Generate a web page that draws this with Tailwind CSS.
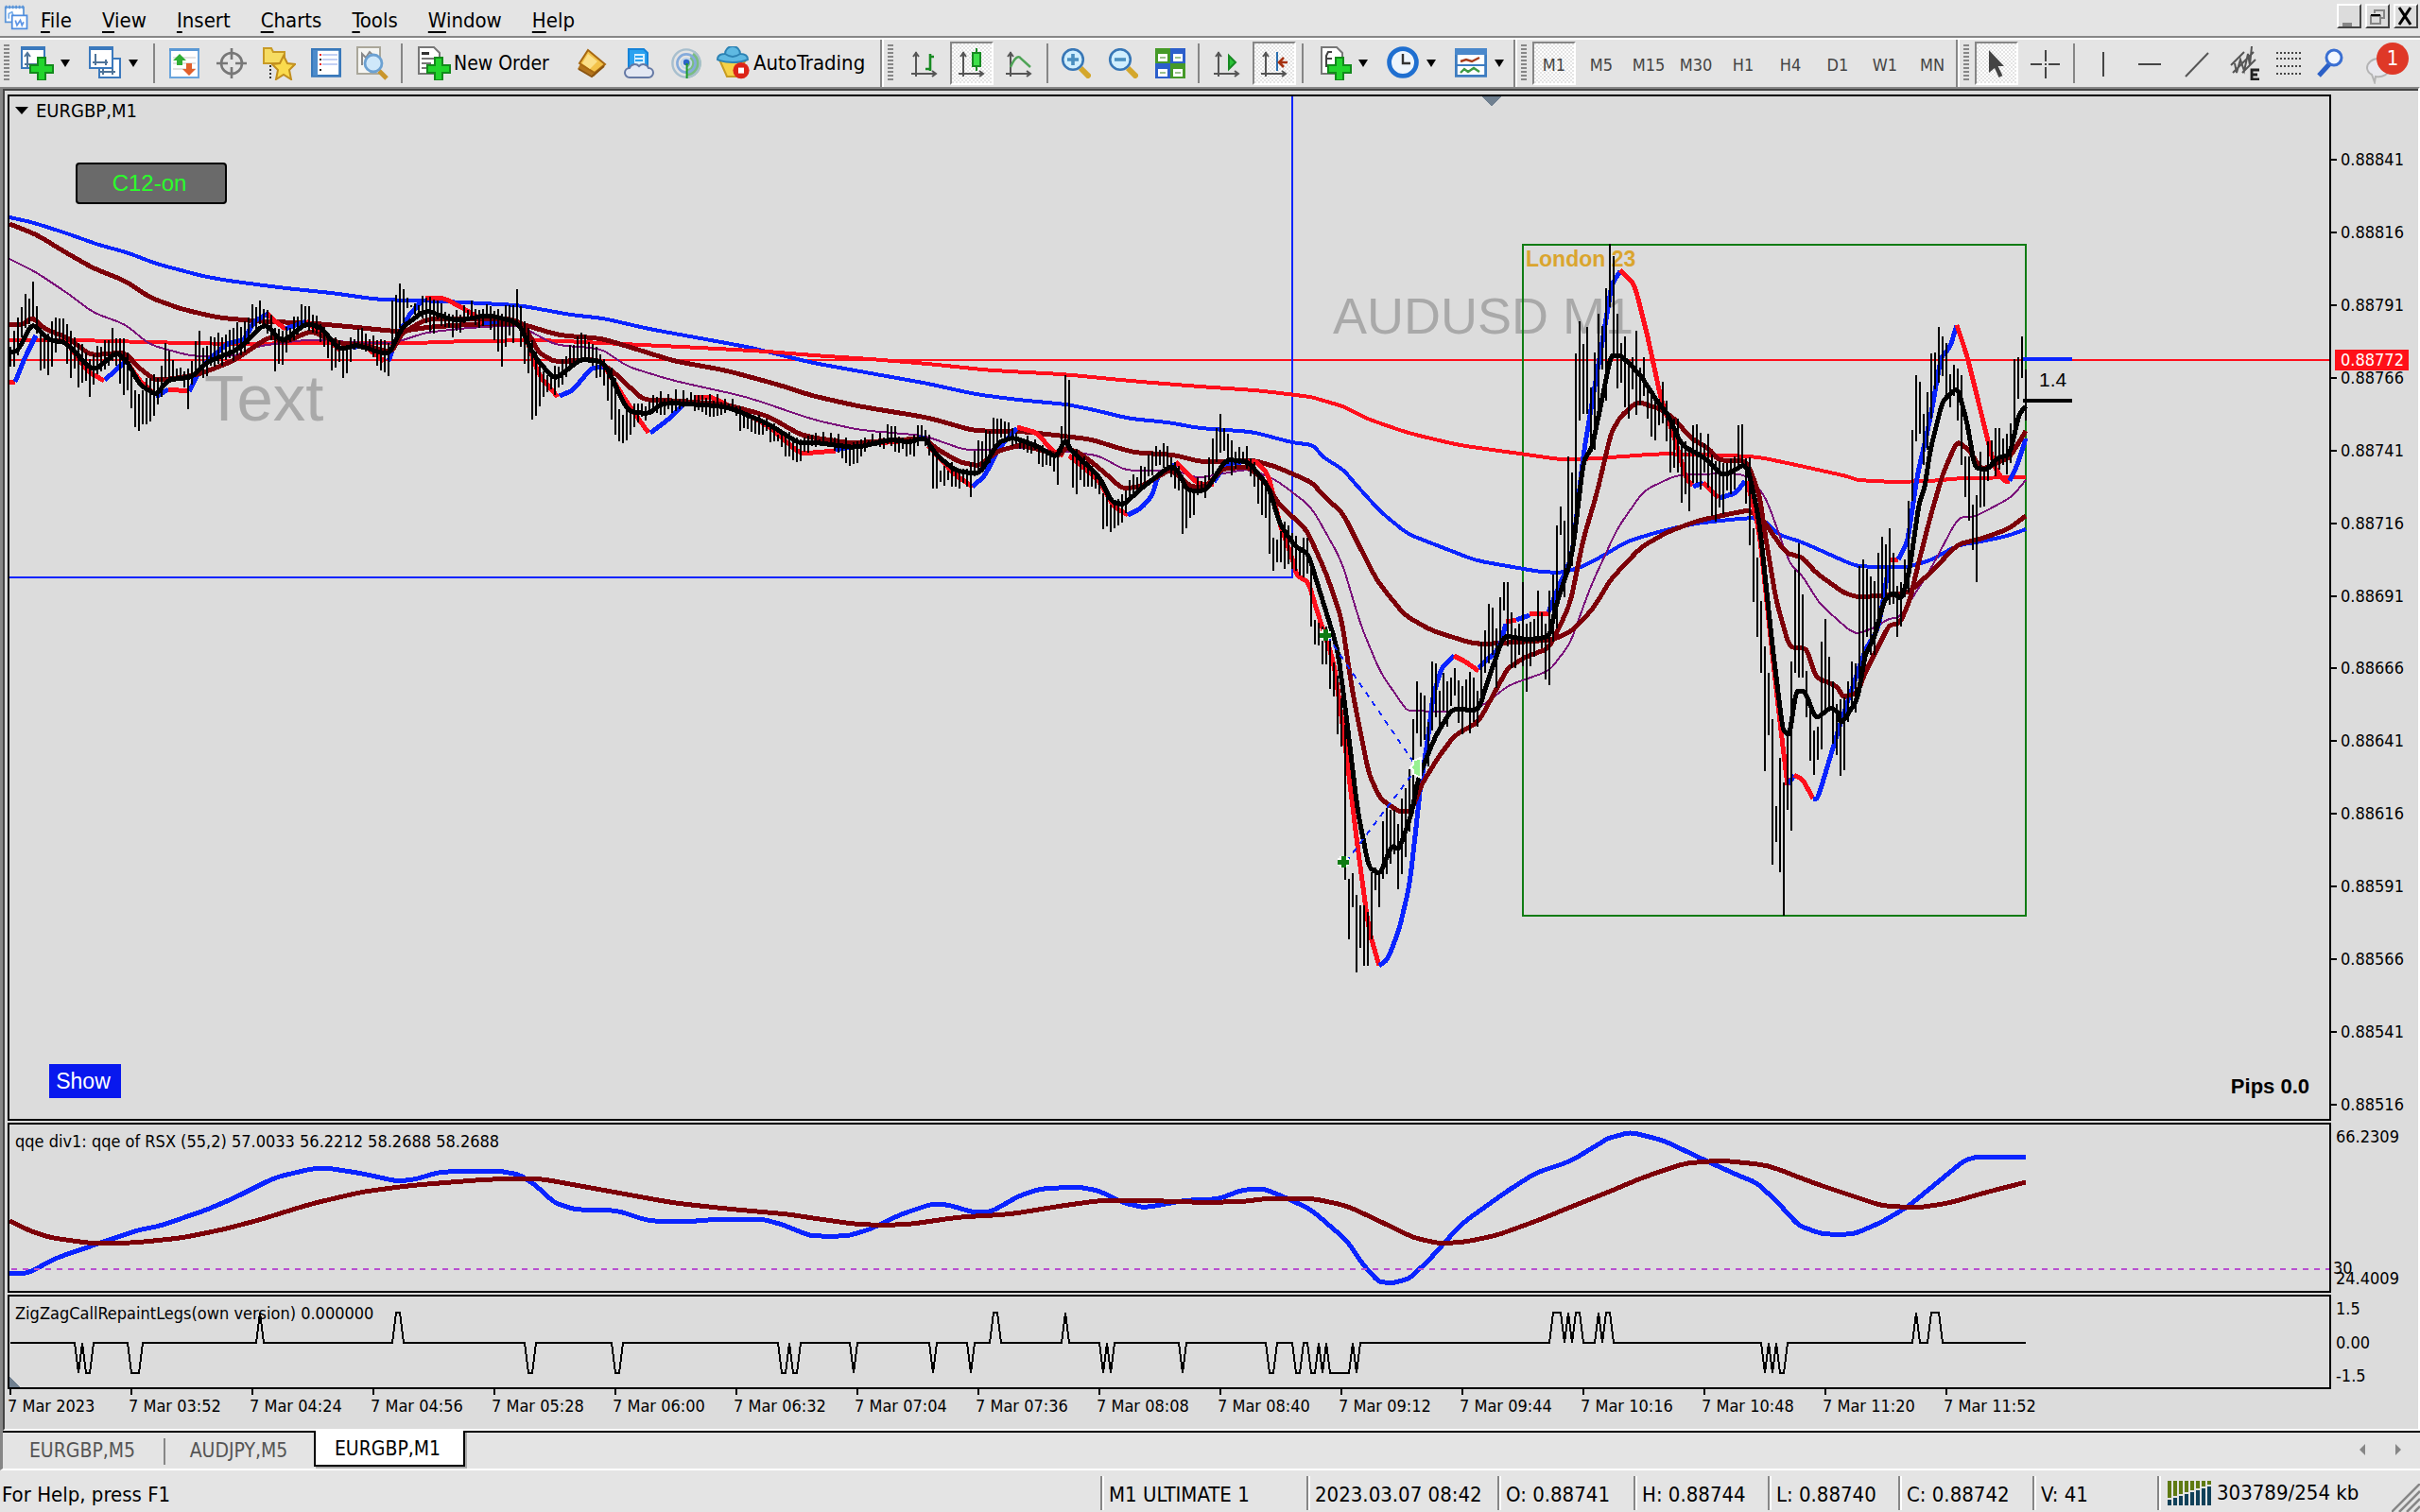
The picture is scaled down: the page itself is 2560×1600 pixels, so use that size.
<!DOCTYPE html>
<html lang="en">
<head>
<meta charset="utf-8">
<title>EURGBP,M1</title>
<script src="https://cdn.jsdelivr.net/npm/@tailwindcss/browser@4"></script>
</head>
<body class="flex min-h-screen flex-col overflow-x-hidden bg-[#e4e4e4] font-['DejaVu_Sans_Condensed','DejaVu_Sans',sans-serif] text-[22px] leading-6 text-black">

<header class="flex h-[42px] shrink-0 items-center border-b-2 border-white shadow-[inset_0_-2px_0_#868686]">
  <svg class="ml-0.5 size-8 shrink-0 self-start pt-1" viewBox="0 0 16 16" fill="none"><path d="M1 2h11v9H1z" fill="#fff" stroke="#5b95d8"/><path d="M1 2h11" stroke="#5b95d8" stroke-width="2" stroke-dasharray="1 1"/><path d="M3 9V6l2-1 1 3" stroke="#7bb0ea"/><path d="M5 7h9v8H5z" fill="#fff" stroke="#4f8de0"/><path d="M7 10l1 3 2-3 1 3 1-2" stroke="#5f96e6"/></svg>
  <nav class="flex flex-1 items-center pt-1" aria-label="Main menu">
    <button class="pl-[9px] pr-4"><u class="underline-offset-4">F</u>ile</button>
    <button class="px-4"><u class="underline-offset-4">V</u>iew</button>
    <button class="px-4"><u class="underline-offset-4">I</u>nsert</button>
    <button class="px-4"><u class="underline-offset-4">C</u>harts</button>
    <button class="px-4"><u class="underline-offset-4">T</u>ools</button>
    <button class="px-4"><u class="underline-offset-4">W</u>indow</button>
    <button class="px-4"><u class="underline-offset-4">H</u>elp</button>
  </nav>
  <div class="mr-0.5 mt-1 flex gap-1 self-start">
    <button aria-label="Minimize" class="size-[26px] border-2 border-b-[#444] border-l-white border-r-[#444] border-t-white bg-[#dcdcdc]"><svg class="size-full" viewBox="0 0 11 11"><path d="M2 9h5v2H2z" fill="#868686"/></svg></button>
    <button aria-label="Restore" class="size-[26px] border-2 border-b-[#444] border-l-white border-r-[#444] border-t-white bg-[#dcdcdc]"><svg class="size-full" viewBox="0 0 11 11" fill="none" stroke="#868686"><path d="M4 2.500h5v4H7M4 2v2M2 5.500h5v4H2z"/><path d="M2 5h5" stroke="#000"/></svg></button>
    <button aria-label="Close" class="size-[26px] border-2 border-b-[#444] border-l-white border-r-[#444] border-t-white bg-[#dcdcdc]"><svg class="size-full" viewBox="0 0 11 11"><path d="M2 1l6 9M8 1l-6 9" stroke="#000" stroke-width="1.500"/></svg></button>
  </div>
</header>

<div class="flex h-[50px] shrink-0 items-center overflow-hidden" role="toolbar" aria-label="Toolbar">
  <span class="mx-1 h-10 w-1.5 shrink-0 bg-[repeating-linear-gradient(#868686_0_2px,transparent_2px_4px)]"></span>
  <button aria-label="New chart" class="flex h-11 w-[72px] shrink-0 items-center gap-1.5 pl-2"><svg class="size-9" viewBox="0 0 18 18"><path d="M.5.500h12v11H.5z" fill="#fff" stroke="#3b79bd"/><path d="M0 0h13v2H0z" fill="#3b79bd"/><path d="M3.500 4v7M2 5.500l1.500-2L5 5.500M2 9.500h8" stroke="#4f7499" fill="none"/><path d="M9 6h4v4h4v4h-4v4H9v-4H5v-4h4z" fill="#22d52c" stroke="#128a1c"/></svg><svg class="h-2 w-2.5" viewBox="0 0 10 8"><path d="M0 0h10L5 8z"/></svg></button>
  <button aria-label="Profiles" class="flex h-11 w-[72px] shrink-0 items-center gap-1.5 pl-2"><svg class="size-9" viewBox="0 0 18 18"><path d="M5.500 6.500h11v10h-11z" fill="#fff" stroke="#3b79bd"/><path d="M.5.500h12v11H.5z" fill="#fff" stroke="#3b79bd"/><path d="M0 0h13v2H0z" fill="#3b79bd"/><path d="M3.500 4v6M2 8.500h8M9 7v3M6 13.500h8M12.500 12v3M7.500 12v3" stroke="#4f7499" fill="none"/></svg><svg class="h-2 w-2.5" viewBox="0 0 10 8"><path d="M0 0h10L5 8z"/></svg></button>
  <span class="ml-1 mr-1.5 h-[42px] w-0.5 shrink-0 bg-[#868686]"></span>
  <button aria-label="Market watch" class="grid h-11 w-[50px] shrink-0 place-items-center"><svg class="size-8" viewBox="0 0 16 16"><path d="M.5.500h15v15H.5z" fill="#fff" stroke="#6aa5dd"/><path d="M0 0h16v1.500H0z" fill="#5a98d4"/><path d="M2 5h12M2 8h12M2 11h12" stroke="#e2e2e2"/><path d="M5.500 3L9 6.500H7V9H4V6.500H2z" fill="#2fae35"/><path d="M10.500 14.500L7 11h2V8h3v3h2z" fill="#e2602b"/></svg></button>
  <button aria-label="Data window" class="grid h-11 w-[50px] shrink-0 place-items-center"><svg class="size-8" viewBox="0 0 16 16" fill="none" stroke="#777" stroke-width="1.300"><circle cx="8" cy="8" r="5.500"/><path d="M8 0v6M8 10v6M0 8h6M10 8h6"/></svg></button>
  <button aria-label="Navigator" class="grid h-11 w-[50px] shrink-0 place-items-center"><svg class="size-9" viewBox="0 0 18 18"><path d="M1 3V1h4l1 2h6v6H1z" fill="#f6dc62" stroke="#c89a26"/><path d="M4.500 10v7" stroke="#333" stroke-dasharray="1 1"/><path d="M11.500 5l2 4 4 .5-3 3 1 5-4-2.500-4 2.500 1-5-3-3 4-.5z" fill="#fadb4e" stroke="#c18e1e"/></svg></button>
  <button aria-label="Terminal" class="grid h-11 w-[50px] shrink-0 place-items-center"><svg class="size-8" viewBox="0 0 16 16"><path d="M.7.700h14.600v14H.7z" fill="#fff" stroke="#3878ba" stroke-width="1.400"/><path d="M1 1h2.500v13.500H1z" fill="#4c8bcb"/><path d="M6 3.500h8M6 6h8M6 8.500h8" stroke="#c3d0f4"/><path d="M4.500 3h1v1h-1zM4.500 8h1v1h-1z" fill="#e22"/><path d="M4.500 5.500h1v1h-1zM4.500 11h1v1h-1z" fill="#222"/></svg></button>
  <button aria-label="Strategy tester" class="grid h-11 w-[50px] shrink-0 place-items-center"><svg class="size-9" viewBox="0 0 18 18"><path d="M.5.500h12v14H.5z" fill="#f5f5f2" stroke="#aaa79a"/><path d="M3 10V4l2 2 2-3 3 3" fill="none" stroke="#888"/><path d="M12 13l4 4" stroke="#c9952b" stroke-width="2.500"/><circle cx="9" cy="9" r="4.500" fill="#cfe8fa" stroke="#6ca1d2" stroke-width="1.400"/></svg></button>
  <span class="ml-1 mr-2.5 h-[42px] w-0.5 shrink-0 bg-[#868686]"></span>
  <button class="flex h-11 w-[165px] shrink-0 items-center gap-0.5 pl-1.5"><svg class="size-9 shrink-0" viewBox="0 0 18 18"><path d="M.5.500h8l3 3v11H.5z" fill="#fff" stroke="#777"/><path d="M2 3h4v1.500H2z" fill="#333"/><path d="M2 6.500h7M2 9h5M2 11.500h4" stroke="#777"/><path d="M9 6h4v4h4v4h-4v4H9v-4H5v-4h4z" fill="#22d52c" stroke="#128a1c"/></svg><span class="text-[21px]">New Order</span></button>
  <button aria-label="MetaEditor" class="grid h-11 w-[50px] shrink-0 place-items-center"><svg class="size-8" viewBox="0 0 16 16"><path d="M6 1l9 8-6 6L.5 11z" fill="#b3741b"/><path d="M6 1l9 7.500-5.500 4.500L1.500 8z" fill="#f3c24a" stroke="#a76812"/><path d="M6 3l5 4-4 4-4-3z" fill="#fbe08a"/><path d="M1 11l7 4 6.500-5.500" fill="none" stroke="#8a5410"/></svg></button>
  <button aria-label="Virtual hosting" class="grid h-11 w-[50px] shrink-0 place-items-center"><svg class="size-8" viewBox="0 0 16 16"><path d="M2.500.500h8l2 2V10h-10z" fill="#2aa2f0" stroke="#1583d8"/><path d="M5.500 3h5.500v6H5.500z" fill="#d8f0ff"/><path d="M6 4.500h4M6 6.500h4" stroke="#2aa2f0"/><path d="M3 15.500a2.500 2.500 0 010-5 3 3 0 015-1 3 3 0 015 1 2.500 2.500 0 010 5z" fill="#e3e8f3" stroke="#6478a4"/></svg></button>
  <button aria-label="Signals" class="grid h-11 w-[50px] shrink-0 place-items-center"><svg class="size-8" viewBox="0 0 16 16" fill="none"><path d="M8 8V16A8 8 0 0012.500 1.500z" fill="#79bd80"/><circle cx="8" cy="8" r="7.300" stroke="#a8bfce" stroke-width="1.200"/><circle cx="8" cy="8" r="4.800" stroke="#85abdb" stroke-width="1.300"/><circle cx="8" cy="8" r="2.600" stroke="#bfd5ea"/><circle cx="8" cy="7.500" r="1.600" fill="#2b64c8"/><path d="M8.300 8v8" stroke="#1f9a2a"/></svg></button>
  <button class="flex h-11 w-[180px] shrink-0 items-center gap-1 pl-1.5"><svg class="size-9 shrink-0" viewBox="0 0 18 18"><path d="M2 7h14l-5 9H6z" fill="#f5d247" stroke="#c79c22"/><path d="M5 4a4 4 0 018 0c3 0 4 1 4 3-4 2-12 2-16 0 0-2 1-3 4-3z" fill="#5fb9e2" stroke="#2d83b4"/><path d="M5 4c3 2 5 2 8 0" stroke="#2d83b4" fill="none"/><circle cx="13.500" cy="12.800" r="4.300" fill="#dc2418"/><path d="M12 11.300h3v3h-3z" fill="#fff"/></svg><span>AutoTrading</span></button>
  <span class="h-[50px] w-1 shrink-0 border-r-2 border-r-white bg-[#868686]"></span>
  <span class="mx-1 h-10 w-1.5 shrink-0 bg-[repeating-linear-gradient(#868686_0_2px,transparent_2px_4px)]"></span>
  <button aria-label="Bar chart" class="ml-1 grid h-11 w-[50px] shrink-0 place-items-center"><svg class="size-8" viewBox="0 0 16 16" fill="none" stroke="#555"><path d="M3.500 2v13M1 13.500h13M2 4.500l1.500-2L5 4.500M12 12l2 1.500-2 1.500"/><path d="M11 3v9M11 4.500h2M8.500 11H11" stroke="#178a22" stroke-width="1.300"/></svg></button>
  <button aria-label="Candlesticks" aria-pressed="true" class="mx-0.5 grid h-[46px] w-[46px] shrink-0 place-items-center border-2 border-b-white border-l-[#868686] border-r-white border-t-[#868686] bg-[repeating-conic-gradient(#fff_0_25%,#e4e4e4_0_50%)] bg-[length:4px_4px]"><svg class="size-8" viewBox="0 0 16 16" fill="none" stroke="#555"><path d="M3.500 2v13M1 13.500h13M2 4.500l1.500-2L5 4.500M12 12l2 1.500-2 1.500"/><path d="M10.500 0v12" stroke="#178a22"/><path d="M8.500 2.500h4v7h-4z" fill="#3ee04a" stroke="#178a22"/></svg></button>
  <button aria-label="Line chart" class="grid h-11 w-[50px] shrink-0 place-items-center"><svg class="size-8" viewBox="0 0 16 16" fill="none" stroke="#555"><path d="M3.500 2v13M1 13.500h13M2 4.500l1.500-2L5 4.500M12 12l2 1.500-2 1.500"/><path d="M3.500 10C6 4 8 4 9 5.500L14 10" stroke="#4ea356" stroke-width="1.200"/></svg></button>
  <span class="mx-1 h-[42px] w-0.5 shrink-0 bg-[#868686]"></span>
  <button aria-label="Zoom in" class="grid h-11 w-[50px] shrink-0 place-items-center"><svg class="size-8" viewBox="0 0 16 16"><path d="M10.500 10.500l5 5" stroke="#d4a72c" stroke-width="3"/><circle cx="6.500" cy="6" r="5.400" fill="#d0efff" stroke="#3877b6" stroke-width="1.300"/><path d="M6.500 3v6M3.500 6h6" stroke="#4a8fc0" stroke-width="1.800"/></svg></button>
  <button aria-label="Zoom out" class="grid h-11 w-[50px] shrink-0 place-items-center"><svg class="size-8" viewBox="0 0 16 16"><path d="M10.500 10.500l5 5" stroke="#d4a72c" stroke-width="3"/><circle cx="6.500" cy="6" r="5.400" fill="#d0efff" stroke="#3877b6" stroke-width="1.300"/><path d="M3.500 6h6" stroke="#4a8fc0" stroke-width="1.800"/></svg></button>
  <button aria-label="Tile windows" class="grid h-11 w-[50px] shrink-0 place-items-center"><svg class="size-8" viewBox="0 0 16 16"><path d="M0 0h8v8H0zM8 8h8v8H8z" fill="#459a28"/><path d="M8 0h8v8H8zM0 8h8v8H0z" fill="#2c5fcb"/><path d="M1.500 3h5v4h-5zM9.500 3h5v4h-5zM1.500 11h5v4h-5zM9.500 11h5v4h-5z" fill="#fff"/><path d="M2.500 5h3M10.500 5h3M2.500 13h3M10.500 13h3" stroke="#9cc28e"/></svg></button>
  <span class="mx-1 h-[42px] w-0.5 shrink-0 bg-[#868686]"></span>
  <button aria-label="Auto scroll" class="grid h-11 w-[50px] shrink-0 place-items-center"><svg class="size-8" viewBox="0 0 16 16" fill="none" stroke="#555"><path d="M3.500 2v13M1 13.500h13M2 4.500l1.500-2L5 4.500M12 12l2 1.500-2 1.500"/><path d="M9 4l3.500 3.500L9 11z" fill="#2bc238" stroke="#178a22"/></svg></button>
  <button aria-label="Chart shift" aria-pressed="true" class="mx-0.5 grid h-[46px] w-[46px] shrink-0 place-items-center border-2 border-b-white border-l-[#868686] border-r-white border-t-[#868686] bg-[repeating-conic-gradient(#fff_0_25%,#e4e4e4_0_50%)] bg-[length:4px_4px]"><svg class="size-8" viewBox="0 0 16 16" fill="none" stroke="#555"><path d="M3.500 2v13M1 13.500h13M2 4.500l1.500-2L5 4.500M12 12l2 1.500-2 1.500"/><path d="M9.500 2v10" stroke="#2a6fb0"/><path d="M15 7.500h-4M13 5l-2.500 2.500L13 10" stroke="#a63210" stroke-width="1.300"/></svg></button>
  <span class="mx-1 h-[42px] w-0.5 shrink-0 bg-[#868686]"></span>
  <button aria-label="Indicators" class="ml-1 flex h-11 w-[72px] shrink-0 items-center gap-1.5 pl-2"><svg class="size-9" viewBox="0 0 18 18"><path d="M1.500.500h8l3 3v11h-11z" fill="#fff" stroke="#777"/><path d="M4 11V5l1-2h2M3.500 6.500H7" fill="none" stroke="#444"/><path d="M9 6h4v4h4v4h-4v4H9v-4H5v-4h4z" fill="#22d52c" stroke="#128a1c"/></svg><svg class="h-2 w-2.5" viewBox="0 0 10 8"><path d="M0 0h10L5 8z"/></svg></button>
  <button aria-label="Periods" class="flex h-11 w-[72px] shrink-0 items-center gap-1.5 pl-2"><svg class="size-9" viewBox="0 0 18 18"><circle cx="8.500" cy="8.500" r="7.200" fill="#eef5fc" stroke="#1f6fd0" stroke-width="2.400"/><path d="M8.500 4v5h4" fill="none" stroke="#333" stroke-width="1.200"/></svg><svg class="h-2 w-2.5" viewBox="0 0 10 8"><path d="M0 0h10L5 8z"/></svg></button>
  <button aria-label="Templates" class="flex h-11 w-[70px] shrink-0 items-center gap-1.5 pl-2"><svg class="size-9" viewBox="0 0 18 18"><path d="M.7 1.700h15.600v14H.7z" fill="#fff" stroke="#3d7cc0" stroke-width="1.400"/><path d="M0 1h17v3.500H0z" fill="#4a88cb"/><path d="M1 10h15" stroke="#3d7cc0"/><path d="M3 8l3-1 3 1 4-2" stroke="#a63a1a" fill="none" stroke-width="1.200"/><path d="M3 14l2-2 2 1.500 3-2 3 2" stroke="#3c9a42" fill="none" stroke-width="1.200"/></svg><svg class="h-2 w-2.5" viewBox="0 0 10 8"><path d="M0 0h10L5 8z"/></svg></button>
  <span class="h-[50px] w-1 shrink-0 border-r-2 border-r-white bg-[#868686]"></span>
  <span class="mx-1 h-10 w-1.5 shrink-0 bg-[repeating-linear-gradient(#868686_0_2px,transparent_2px_4px)]"></span>
  <div class="flex items-center text-lg leading-6 text-[#444]">
    <button aria-pressed="true" class="mx-0.5 h-[46px] w-[46px] shrink-0 border-2 border-b-white border-l-[#868686] border-r-white border-t-[#868686] bg-[repeating-conic-gradient(#fff_0_25%,#e4e4e4_0_50%)] bg-[length:4px_4px] pt-1">M1</button>
    <button class="h-11 w-[50px] shrink-0 pt-1">M5</button>
    <button class="h-11 w-[50px] shrink-0 pt-1">M15</button>
    <button class="h-11 w-[50px] shrink-0 pt-1">M30</button>
    <button class="h-11 w-[50px] shrink-0 pt-1">H1</button>
    <button class="h-11 w-[50px] shrink-0 pt-1">H4</button>
    <button class="h-11 w-[50px] shrink-0 pt-1">D1</button>
    <button class="h-11 w-[50px] shrink-0 pt-1">W1</button>
    <button class="h-11 w-[50px] shrink-0 pt-1">MN</button>
  </div>
  <span class="h-[50px] w-1 shrink-0 border-r-2 border-r-white bg-[#868686]"></span>
  <span class="mx-1 h-10 w-1.5 shrink-0 bg-[repeating-linear-gradient(#868686_0_2px,transparent_2px_4px)]"></span>
  <button aria-label="Cursor" aria-pressed="true" class="mx-0.5 grid h-[46px] w-[46px] shrink-0 place-items-center border-2 border-b-white border-l-[#868686] border-r-white border-t-[#868686] bg-[repeating-conic-gradient(#fff_0_25%,#e4e4e4_0_50%)] bg-[length:4px_4px]"><svg class="size-8" viewBox="0 0 16 16"><path d="M4 1l8 8.500H8.800l2.400 5-1.900 1L7 10.500 4 13z" fill="#444"/></svg></button>
  <button aria-label="Crosshair" class="grid h-11 w-[52px] shrink-0 place-items-center"><svg class="size-8" viewBox="0 0 16 16" stroke="#444"><path d="M8.500 1v6M8.500 10v6M0.500 8.500h6M10 8.500h6M8 8.500h1"/></svg></button>
  <span class="mx-1 h-[42px] w-0.5 shrink-0 bg-[#868686]"></span>
  <button aria-label="Vertical line" class="grid h-11 w-[50px] shrink-0 place-items-center"><svg class="size-8" viewBox="0 0 16 16" stroke="#444"><path d="M8.500 2v13"/></svg></button>
  <button aria-label="Horizontal line" class="grid h-11 w-[50px] shrink-0 place-items-center"><svg class="size-8" viewBox="0 0 16 16" stroke="#444"><path d="M2 8.500h12"/></svg></button>
  <button aria-label="Trendline" class="grid h-11 w-[50px] shrink-0 place-items-center"><svg class="size-8" viewBox="0 0 16 16" stroke="#555"><path d="M2 15L14 2.500"/></svg></button>
  <button aria-label="Equidistant channel" class="grid h-11 w-[50px] shrink-0 place-items-center"><svg class="size-9" viewBox="0 0 18 18" fill="none" stroke="#555"><path d="M2 10L9 3M3 14L14 3M8 14l7-7M4 9l1 5 2-7 2 6 2-9 1 6 1-10"/><path d="M17 12.500h-4v5h4M13 15h3" stroke="#222" stroke-width="1.400"/></svg></button>
  <button aria-label="Fibonacci" class="grid h-11 w-[42px] shrink-0 place-items-center"><svg class="size-8" viewBox="0 0 16 16" stroke="#444"><path d="M2 2.500h13M2 5.500h13M2 9.500h13M2 13.500h13" stroke-dasharray="1 1"/></svg></button>
  <button aria-label="Search" class="ml-auto mr-3.5 grid h-11 w-11 shrink-0 place-items-center"><svg class="size-8" viewBox="0 0 16 16"><path d="M7 8.500l-5.500 6" stroke="#2a5fc6" stroke-width="2.500"/><circle cx="9.500" cy="5" r="4" fill="#f2f7ff" stroke="#3a6fd2" stroke-width="1.500"/></svg></button>
  <button aria-label="1 new message" class="relative mr-3 h-11 w-[46px] shrink-0"><svg class="size-full" viewBox="0 0 46 44"><path d="M2 27a12 10 0 0124 0 12 10 0 01-15 9l-1 6-3-8a10 9 0 01-5-7z" fill="#e8e8ee" stroke="#b4b4b4" stroke-width="2"/></svg><span class="absolute right-0 top-0 size-[34px] rounded-full bg-[#df3827] text-center text-[22px] leading-[34px] text-white">1</span></button>
</div>

<main class="flex flex-1 flex-col border-l-[3px] border-r-2 border-t-2 border-l-[#868686] border-r-white border-t-[#868686]">
<div class="flex flex-1 flex-col border-b-2 border-l-2 border-t-2 border-b-white border-l-[#444] border-t-[#444] bg-[#dcdcdc] pl-[3px] pt-1 text-lg leading-6">

  <section class="flex min-h-96 flex-1" aria-label="EURGBP,M1 price chart">
    <div class="relative flex-1 border-2 border-black">
      <span class="absolute left-[206px] top-[280px] font-['Liberation_Sans',Arial,sans-serif] text-[69px] leading-[80px] text-[#a9a9a9]">Text</span>
      <span class="absolute left-[1400px] top-[200px] font-['Liberation_Sans',Arial,sans-serif] text-[54px] leading-[64px] text-[#a9a9a9]">AUDUSD M1</span>
      <span class="absolute left-[1604px] top-[160px] font-['Liberation_Sans',Arial,sans-serif] text-[23px] font-bold text-[#daa52e]">London 23</span>
      <svg id="price" class="absolute inset-0 size-full" viewBox="10 102 2454 1082" preserveAspectRatio="none" fill="none" shape-rendering="crispEdges" stroke-linejoin="round"></svg>
      <h1 class="absolute left-1.5 top-[3px] flex items-center gap-2 text-xl leading-6"><svg class="h-2 w-3.5" viewBox="0 0 14 8"><path d="M0 0h14L7 8z"/></svg>EURGBP,M1</h1>
      <button class="absolute left-[70px] top-[70px] h-11 w-40 rounded-sm border-2 border-black bg-[#6a6a6a] pr-1 font-['Liberation_Sans',Arial,sans-serif] text-2xl leading-8 text-[#2aff2a]">C12-on</button>
      <button class="absolute bottom-[22px] left-[42px] h-9 w-[76px] bg-[#0818ee] pr-1 font-['Liberation_Sans',Arial,sans-serif] text-[23px] text-white">Show</button>
      <span class="absolute left-[2147px] top-[288px] font-['Liberation_Sans',Arial,sans-serif] text-[21px]">1.4</span>
      <span class="absolute bottom-[22px] right-[21px] font-['Liberation_Sans',Arial,sans-serif] text-[22px] font-bold">Pips 0.0</span>
    </div>
    <div class="relative w-[92px]">
      <ol class="flex h-full flex-col justify-between pb-[5px] pt-[57px]">
        <li class="flex items-center gap-1"><i class="h-0.5 w-1.5 bg-black"></i>0.88841</li>
        <li class="flex items-center gap-1"><i class="h-0.5 w-1.5 bg-black"></i>0.88816</li>
        <li class="flex items-center gap-1"><i class="h-0.5 w-1.5 bg-black"></i>0.88791</li>
        <li class="flex items-center gap-1"><i class="h-0.5 w-1.5 bg-black"></i>0.88766</li>
        <li class="flex items-center gap-1"><i class="h-0.5 w-1.5 bg-black"></i>0.88741</li>
        <li class="flex items-center gap-1"><i class="h-0.5 w-1.5 bg-black"></i>0.88716</li>
        <li class="flex items-center gap-1"><i class="h-0.5 w-1.5 bg-black"></i>0.88691</li>
        <li class="flex items-center gap-1"><i class="h-0.5 w-1.5 bg-black"></i>0.88666</li>
        <li class="flex items-center gap-1"><i class="h-0.5 w-1.5 bg-black"></i>0.88641</li>
        <li class="flex items-center gap-1"><i class="h-0.5 w-1.5 bg-black"></i>0.88616</li>
        <li class="flex items-center gap-1"><i class="h-0.5 w-1.5 bg-black"></i>0.88591</li>
        <li class="flex items-center gap-1"><i class="h-0.5 w-1.5 bg-black"></i>0.88566</li>
        <li class="flex items-center gap-1"><i class="h-0.5 w-1.5 bg-black"></i>0.88541</li>
        <li class="flex items-center gap-1"><i class="h-0.5 w-1.5 bg-black"></i>0.88516</li>
      </ol>
      <span class="absolute left-1 top-[270px] h-[22px] w-[78px] bg-[#ff1018] pl-1.5 leading-[22px] text-white">0.88772</span>
    </div>
  </section>

  <section class="mt-0.5 flex h-[180px]" aria-label="qqe indicator">
    <div class="relative flex-1 border-2 border-black">
      <svg id="qqe" class="absolute inset-0 size-full" viewBox="10 1190 2454 176" preserveAspectRatio="none" fill="none" shape-rendering="crispEdges" stroke-linejoin="round"></svg>
      <p class="absolute left-1.5 top-1.5">qqe div1: qqe of RSX (55,2) 57.0033 56.2212 58.2688 58.2688</p>
    </div>
    <div class="relative w-[92px] pl-[5px]">
      <p class="pt-[3px]">66.2309</p>
      <p class="absolute bottom-[14px] left-0.5">30</p>
      <p class="absolute bottom-[3px]">24.4009</p>
    </div>
  </section>

  <section class="mt-0.5 flex h-[100px]" aria-label="ZigZag indicator">
    <div class="relative flex-1 border-2 border-black">
      <svg id="zigzag" class="absolute inset-0 size-full" viewBox="10 1372 2454 96" preserveAspectRatio="none" fill="none" shape-rendering="crispEdges"></svg>
      <p class="absolute left-1.5 top-1.5">ZigZagCallRepaintLegs(own version) 0.000000</p>
    </div>
    <ol class="flex w-[92px] flex-col justify-between pb-0.5 pl-[5px] pt-[3px]"><li>1.5</li><li>0.00</li><li>-1.5</li></ol>
  </section>

  <ol id="times" class="flex h-[42px] overflow-hidden whitespace-nowrap"></ol>
</div>
</main>

<nav class="flex h-[42px] shrink-0 items-start border-b-2 border-l-[3px] border-b-white border-l-[#868686] shadow-[inset_0_2px_0_#000]" aria-label="Chart tabs">
  <button class="h-10 w-[170px] pr-0.5 pt-0.5 text-[21px] text-[#555]">EURGBP,M5</button>
  <span class="mt-2 h-7 w-0.5 bg-[#868686]"></span>
  <button class="h-10 w-[157px] pr-0.5 pt-0.5 text-[21px] text-[#555]">AUDJPY,M5</button>
  <button aria-current="true" class="h-[38px] w-40 border-2 border-t-0 border-black bg-white pr-1 pt-0.5 text-[21px] shadow-[2px_2px_0_#aaa]">EURGBP,M1</button>
  <span class="ml-auto flex items-center gap-8 self-center pr-5">
    <button aria-label="Scroll left"><svg class="h-3 w-1.5" viewBox="0 0 6 12"><path d="M6 0v12L0 6z" fill="#868686"/></svg></button>
    <button aria-label="Scroll right"><svg class="h-3 w-1.5" viewBox="0 0 6 12"><path d="M0 0v12l6-6z" fill="#868686"/></svg></button>
  </span>
</nav>

<footer class="flex h-11 shrink-0 items-center gap-0.5 overflow-hidden whitespace-nowrap pt-1">
  <span class="h-9 flex-1 pl-0.5 leading-10">For Help, press F1</span>
  <span class="h-9 w-[216px] border-l-2 border-[#868686] pl-[7px] leading-10 shadow-[inset_2px_0_0_#fff]">M1 ULTIMATE 1</span>
  <span class="h-9 w-[200px] border-l-2 border-[#868686] pl-[7px] leading-10 shadow-[inset_2px_0_0_#fff]">2023.03.07 08:42</span>
  <span class="h-9 w-[142px] border-l-2 border-[#868686] pl-[7px] leading-10 shadow-[inset_2px_0_0_#fff]">O: 0.88741</span>
  <span class="h-9 w-[140px] border-l-2 border-[#868686] pl-[7px] leading-10 shadow-[inset_2px_0_0_#fff]">H: 0.88744</span>
  <span class="h-9 w-[136px] border-l-2 border-[#868686] pl-[7px] leading-10 shadow-[inset_2px_0_0_#fff]">L: 0.88740</span>
  <span class="h-9 w-[140px] border-l-2 border-[#868686] pl-[7px] leading-10 shadow-[inset_2px_0_0_#fff]">C: 0.88742</span>
  <span class="h-9 w-[130px] border-l-2 border-[#868686] pl-[7px] leading-10 shadow-[inset_2px_0_0_#fff]">V: 41</span>
  <span class="flex h-9 w-[246px] items-center gap-1.5 border-l-2 border-[#868686] pl-[9px] leading-10 shadow-[inset_2px_0_0_#fff]">
    <svg class="h-[26px] w-[46px]" viewBox="0 0 46 26" shape-rendering="crispEdges"><path d="M0 0h4v18H0zM6 0h4v16H6zM12 0h4v14h-4zM18 0h4v12h-4zM24 0h4v10h-4zM30 0h4v8h-4zM36 0h4v6h-4zM42 0h4v4h-4z" fill="#5f7a12"/><path d="M0 20h4v6H0zM6 18h4v8H6zM12 16h4v10h-4zM18 14h4v12h-4zM24 12h4v14h-4zM30 10h4v16h-4zM36 8h4v18h-4zM42 6h4v20h-4z" fill="#0f4058"/></svg>
    303789/254 kb</span>
  <svg class="h-[30px] w-[30px] self-end" viewBox="0 0 30 30" stroke="#868686" stroke-width="2.500"><path d="M0 30L30 0M8 30L30 8M16 30l14-14M24 30l6-6"/></svg>
</footer>

<script>
// Each stretch of the chart is digitised on its own grid: [x origin, y origin, units per px in x, in y].
const grids = {
  a: [0, 200, 1.823, 3], b: [860, 300, 2.45, 2.119], c: [1400, 240, 2.8, 2.119], d: [1920, 240, 2.45, 2.119],
  e: [0, 1100, 1.823, 3], f: [860, 1160, 1.823, 3], g: [1700, 1100, 1.823, 3]
};
const BLUE = '#0a24ff', RED = '#ff0f1c', MAROON = '#7d0008', PURPLE = '#7a107a';
const NS = 'http://www.w3.org/2000/svg';

function add(id, d, stroke, width, extra) {
  const p = document.createElementNS(NS, 'path');
  p.setAttribute('d', d);
  p.setAttribute('stroke', stroke);
  p.setAttribute('stroke-width', width);
  for (const k in extra || {}) p.setAttribute(k, extra[k]);
  document.getElementById(id).appendChild(p);
}
function toPx(g, x, y) {
  const q = grids[g];
  return [Math.round(q[0] + x / q[2]), Math.round(q[1] + y / q[3])];
}
// Where two grids overlap, the later one wins, so a line never runs backwards.
function points(parts) {
  const out = [];
  for (const g in parts) parts[g].trim().split(/\s+/).forEach(s => {
    const n = s.split(',').map(Number), p = toPx(g, n[0], n[1]);
    while (out.length && out[out.length - 1][0] >= p[0]) out.pop();
    out.push(p);
  });
  return out;
}
// Smooth curve through the points, rounded only near each corner.
function curve(pts) {
  let d = 'M' + pts[0];
  for (let i = 1; i < pts.length - 1; i++) {
    const before = [(pts[i][0] * 3 + pts[i - 1][0]) / 4, (pts[i][1] * 3 + pts[i - 1][1]) / 4];
    const after = [(pts[i][0] * 3 + pts[i + 1][0]) / 4, (pts[i][1] * 3 + pts[i + 1][1]) / 4];
    d += 'L' + before + 'Q' + pts[i] + ' ' + after;
  }
  return d + 'L' + pts[pts.length - 1];
}

// Objects on the price chart
add('price', 'M10 381H2464', RED, 2);
add('price', 'M10 611H1367V102', BLUE, 2);
add('price', 'M1611 259H2143V969H1611Z', '#107c14', 2);
add('price', 'M1568 102h20l-10 11z', 'none', 0, { fill: '#708090' });

// Moving averages
add('price', curve(points({
  a: '18,90 60,105 130,140 190,178 245,200 300,238 390,275 440,292 550,315 640,330 730,350 860,356 1000,370 1100,400 1165,410 1250,445 1370,480 1450,503 1500,525',
  b: '0,178 150,202 300,224 420,248 530,260 660,272 730,283 820,302 920,312 1000,325 1140,333 1240,355 1300,376',
  c: '-30,490 0,516 60,545 110,590 170,640 250,688 350,718 450,748 560,762 640,774 700,776 760,764 830,738 900,706 1000,683 1100,665 1200,656 1270,652 1310,662 1350,690 1420,708 1500,735 1550,753',
  d: '110,760 160,763 240,763 300,748 370,715 430,706 500,693 547,678' })), BLUE, 4);
add('price', curve(points({
  a: '18,480 150,480 280,487 450,492 600,490 800,488 900,482 1050,480 1200,492 1350,505 1480,515',
  b: '0,162 150,170 300,181 460,194 650,203 820,218 1000,232 1150,239 1290,255',
  c: '0,390 60,403 130,430 250,463 400,490 560,507 720,524 850,518 1000,509 1280,514 1400,535 1550,560',
  d: '110,567 200,572 300,570 380,563 547,562' })), RED, 4);
add('price', curve(points({
  a: '18,222 70,265 130,330 180,392 240,430 290,495 370,530 450,530 500,498 600,478 700,490 760,490 820,455 900,440 1000,432 1070,495 1160,508 1210,565 1300,610 1440,660',
  b: '0,305 120,328 290,342 400,375 540,368 640,375 740,385 810,420 940,420 1000,437 1130,415 1200,440 1290,500 1370,620 1420,770 1470,870 1530,945',
  c: '250,1085 350,1086 430,1084 480,1070 550,1028 670,995 730,935 790,810 870,675 950,592 1050,555 1250,552 1310,605 1380,755 1420,785 1470,845 1550,900',
  d: '105,912 120,910 150,900 190,880 220,876 300,770 370,652 420,648 510,605 547,568' })), PURPLE, 2);
add('price', curve(points({
  a: '18,112 70,145 130,205 180,252 240,290 290,345 350,382 420,408 500,420 600,425 680,438 770,452 830,437 920,430 1000,425 1080,465 1160,475 1230,510 1300,545 1400,575 1500,620',
  b: '0,253 120,276 300,300 420,330 530,330 640,342 720,350 830,380 930,384 1010,400 1140,396 1200,412 1290,445',
  c: '0,602 60,645 110,720 160,795 240,870 320,905 450,936 600,930 680,925 740,905 800,855 850,790 940,718 1020,685 1110,660 1200,645 1260,636 1300,655 1370,730 1420,742 1460,775 1540,820',
  d: '110,830 240,823 300,775 370,713 430,700 500,678 547,648' })), MAROON, 5);

// Turning line, blue while it rises and red while it falls
[
  ['a', RED, '18,612 30,612'], ['a', BLUE, '30,612 50,530 70,465'], ['a', RED, '130,490 170,578 200,608'],
  ['a', BLUE, '203,606 240,550'], ['a', RED, '250,560 270,610 300,655'], ['a', BLUE, '300,660 325,635'],
  ['a', RED, '325,635 365,642'], ['a', BLUE, '365,642 390,560 440,490 470,480 490,420 515,395'],
  ['a', RED, '515,395 530,420 550,445'], ['a', BLUE, '550,445 590,420'], ['a', RED, '590,420 620,460 655,510'],
  ['a', BLUE, '680,505 700,495'], ['a', RED, '705,500 740,545'], ['a', BLUE, '750,545 765,470 790,400 815,355'],
  ['a', RED, '820,348 855,345 915,400 930,430'], ['a', BLUE, '930,425 960,420'], ['a', RED, '1010,450 1040,590 1075,660'],
  ['a', BLUE, '1080,658 1105,640 1140,570 1165,565'], ['a', RED, '1165,560 1210,680 1250,775'],
  ['a', BLUE, '1255,773 1290,730 1320,680'], ['a', RED, '1340,660 1370,660 1420,700 1480,750 1540,838 1568,840'],
  ['b', RED, '0,380 60,376'], ['b', BLUE, '60,374 110,365'], ['b', RED, '110,362 250,352'], ['b', BLUE, '250,352 290,345'],
  ['b', RED, '300,365 370,430 415,455'], ['b', BLUE, '415,455 445,430 480,370 530,325'],
  ['b', RED, '530,323 580,335 620,375 650,385'], ['b', RED, '665,385 740,440 780,500 815,520'],
  ['b', BLUE, '815,520 850,505 880,475 895,430 940,405'], ['b', RED, '940,400 980,435 1000,450 1040,450'],
  ['b', BLUE, '1040,445 1070,405 1110,400'],
  ['b', RED, '1110,398 1150,398 1180,430 1210,540 1240,610 1255,655 1285,670 1310,745 1350,850 1375,1000 1410,1260 1440,1450 1467,1530'],
  ['b', BLUE, '1467,1530 1490,1515 1520,1450 1545,1350 1560,1240 1575,1120'],
  ['c', BLUE, '284,1280 310,1140 325,1050 350,990 385,963'], ['c', RED, '385,963 420,975 460,995'],
  ['c', BLUE, '460,990 520,945 540,890'], ['c', RED, '540,885 570,882'], ['c', BLUE, '570,882 610,870'],
  ['c', RED, '610,867 665,868'], ['c', BLUE, '665,865 700,800 735,740 770,510 800,370 835,220 855,130 880,100'],
  ['c', RED, '880,98 920,130 960,245 1000,385 1040,470 1075,565 1095,580'], ['c', BLUE, '1095,582 1125,575'],
  ['c', RED, '1125,575 1170,608'], ['c', BLUE, '1170,608 1220,597 1250,570'],
  ['c', RED, '1255,570 1290,680 1330,960 1355,1130 1375,1252'], ['c', BLUE, '1378,1250 1395,1230'],
  ['c', RED, '1395,1230 1420,1240 1450,1283'], ['c', BLUE, '1450,1283 1465,1283 1520,1140 1545,1080 1568,1030'],
  ['d', BLUE, '98,1030 130,950 165,900 190,760'], ['d', RED, '190,745 215,745'],
  ['d', BLUE, '215,745 240,705 265,560 300,430 325,295 350,270 368,220'],
  ['d', RED, '368,220 395,290 430,420 465,540 490,570 505,570'], ['d', BLUE, '505,570 525,535 547,475']
].forEach(s => add('price', curve(points({ [s[0]]: s[2] })), s[1], 5));

add('price', curve(points({
  a: '18,432 45,430 62,408 90,448 130,470 175,528 240,520 270,570 300,608 380,590 450,545 520,468 550,485 600,450 650,488 700,495 755,520 775,460 820,415 880,410 980,412 1010,430 1040,520 1070,548 1150,540 1190,590 1240,670 1300,672 1400,685 1480,720 1540,778',
  b: '0,345 100,358 240,350 290,348 320,370 380,400 430,408 480,375 540,363 600,375 640,385 655,368 690,380 750,420 800,460 850,455 920,420 940,425 980,455 1020,455 1060,415 1130,412 1170,445 1210,498 1280,550 1330,650 1370,750 1400,920 1440,1100 1470,1155 1520,1185 1550,1183',
  c: '290,1250 340,1190 390,1140 460,1110 510,1040 545,990 600,965 670,945 730,845 770,700 810,600 850,465 880,425 930,393 1000,408 1040,430 1090,475 1140,495 1170,523 1255,525 1290,600 1310,700 1340,840 1380,943 1430,945 1460,1010 1520,1030 1540,1055',
  d: '110,1045 130,1000 160,950 190,895 220,888 245,840 270,750 300,650 330,555 368,482 400,500 430,545 470,530 505,518 547,458' })), MAROON, 5);
add('price', curve(points({
  a: '18,518 35,512 62,425 95,480 125,485 180,578 225,520 245,545 270,620 300,655 325,605 370,598 400,550 460,510 510,425 545,485 590,425 620,440 655,510 690,495 750,528 775,440 820,383 880,420 940,400 1000,425 1030,530 1070,605 1120,540 1165,550 1210,705 1250,715 1280,678 1400,690 1480,745 1540,808',
  b: '0,355 110,368 200,350 250,355 290,345 320,385 370,420 430,428 480,355 520,345 580,365 630,390 655,350 670,375 740,430 775,490 805,495 850,460 925,410 945,420 970,465 1020,465 1070,395 1130,400 1180,455 1210,540 1250,590 1285,605 1320,710 1360,820 1380,950 1410,1180 1440,1310 1470,1325 1500,1260 1520,1270 1550,1190',
  c: '280,1240 330,1145 380,1080 460,1085 490,1010 535,915 600,925 668,920 690,850 735,740 770,525 795,495 820,405 850,288 880,288 910,310 940,335 990,395 1020,420 1060,490 1130,520 1185,560 1255,530 1290,660 1330,940 1360,1130 1380,1140 1400,1040 1425,1040 1460,1105 1500,1078 1520,1085 1535,1115',
  d: '110,1060 130,960 155,920 180,840 200,820 225,835 245,770 270,620 285,585 300,500 330,390 370,360 395,440 415,540 445,545 475,518 505,510 530,420 547,403' })), '#000', 5);

// Minute bars: x, high, low
const bars = {
  a: '20,500,565 28,450,565 42,375,470 50,332,440 57,348,430 64,295,405 72,372,460 80,440,575 93,460,592 101,420,565 115,410,480 122,412,480 137,450,600 144,470,570 152,490,630 166,520,610 173,540,660 180,525,620 195,500,580 210,480,560 217,440,545 225,475,560 238,475,655 246,520,640 254,560,695 261,640,755 268,650,768 282,600,748 290,600,738 300,600,685 312,560,660 319,490,600 340,570,610 355,580,630 363,570,700 370,545,620 384,450,565 392,505,600 406,468,560 421,455,555 428,470,560 450,440,545 472,420,520 488,365,440 502,355,430 515,385,460 523,400,480 530,440,580 545,450,558 560,440,485 582,365,430 590,372,440 604,400,455 620,430,485 640,470,575 655,480,548 662,500,600 680,478,510 698,440,510 706,460,515 728,480,560 742,480,582 750,490,594 757,355,500 771,300,440 778,318,425 786,345,378 800,362,400 820,345,425 838,350,460 845,355,415 866,395,440 873,400,472 888,400,455 910,355,405 925,385,440 940,365,400 968,395,563 983,370,465 990,368,490 997,318,430 1005,372,500 1019,440,585 1027,480,732 1041,560,690 1055,590,645 1070,560,655 1085,540,620 1099,495,560 1114,468,540 1120,455,550 1136,485,545 1150,500,600 1165,540,625 1187,600,780 1194,700,802 1215,705,780 1231,680,740 1245,690,735 1260,655,710 1290,650,700 1340,655,705 1395,665,712 1410,665,700 1428,690,768 1440,715,762 1475,730,768 1486,750,805 1505,770,820 1515,780,850 1537,790,868 1550,790,835 1565,780,830',
  b: '0,340,365 60,345,375 100,350,385 105,355,405 130,345,378 180,345,370 194,315,360 204,320,365 230,345,370 243,355,388 262,340,388 270,318,365 290,328,365 300,340,385 312,370,460 321,385,460 330,420,445 350,420,440 360,400,455 375,415,460 400,415,455 410,400,478 420,375,430 445,370,420 450,328,410 478,303,360 488,303,345 500,310,345 520,325,365 540,345,370 575,350,372 585,370,405 615,375,410 634,370,452 645,320,380 655,205,350 663,217,360 673,370,458 684,370,472 695,390,440 725,410,455 745,430,472 753,470,550 772,495,557 785,490,548 805,480,515 812,465,515 820,440,480 860,412,455 880,378,430 890,365,410 920,365,410 930,390,435 948,410,465 957,430,562 968,460,548 988,470,520 1000,435,475 1020,430,480 1030,390,440 1046,325,400 1055,293,380 1065,325,375 1085,352,430 1095,378,415 1124,365,415 1145,400,455 1163,430,520 1173,440,525 1183,470,605 1193,570,645 1203,575,625 1222,535,640 1240,560,640 1262,590,655 1282,570,650 1291,620,770 1301,755,810 1311,760,812 1320,770,855 1330,770,855 1340,800,910 1350,850,925 1360,880,1010 1370,930,1038 1379,990,1338 1389,1335,1470 1398,1322,1398 1408,1370,1545 1418,1395,1490 1428,1395,1530 1438,1410,1530 1447,1320,1470 1457,1310,1360 1467,1320,1398 1477,1205,1335 1487,1175,1325 1506,1180,1280 1516,1212,1358 1526,1155,1325 1545,1090,1230 1555,980,1200',
  c: '266,1105,1310 277,1020,1135 288,1045,1165 300,1050,1150 311,1110,1210 322,975,1130 333,978,1100 344,1040,1120 355,1000,1085 367,1020,1120 378,1010,1075 389,990,1050 400,1018,1112 411,1030,1138 422,1015,1085 433,998,1135 445,1010,1110 456,1040,1120 467,930,1060 478,905,1000 490,845,980 501,855,960 512,900,1035 523,830,940 535,797,860 546,797,940 557,865,990 568,900,990 579,890,960 591,797,985 602,890,1042 613,885,985 624,880,965 635,815,930 646,865,945 658,890,1015 669,815,1028 680,780,930 691,670,900 702,628,690 714,658,830 725,515,750 736,550,760 747,285,650 759,212,435 770,262,420 781,225,420 792,360,500 803,282,500 815,195,420 826,222,320 837,137,390 848,38,180 859,65,290 871,195,362 882,260,350 893,245,405 905,298,430 915,292,365 927,233,422 938,315,400 949,292,380 960,350,430 971,375,470 983,380,478 994,385,445 1005,348,440 1016,390,480 1027,425,550 1039,430,540 1050,430,550 1061,485,618 1072,480,600 1083,495,638 1095,445,575 1106,442,575 1117,462,590 1128,485,550 1139,465,585 1150,510,648 1162,525,662 1173,525,630 1184,530,645 1195,530,592 1207,520,600 1218,515,590 1229,445,540 1240,442,540 1252,520,620 1263,518,715 1274,675,842 1285,742,920 1296,840,1000 1307,940,1220 1319,1000,1140 1330,1105,1430 1341,1300,1380 1352,1190,1448 1363,1245,1545 1375,1130,1308 1386,975,1355 1397,770,1000 1408,710,1010 1419,825,1010 1431,995,1100 1442,1060,1198 1453,1130,1230 1464,1120,1195 1475,930,1172 1487,880,1090 1498,965,1080 1509,1020,1160 1520,1070,1185 1531,1060,1232 1542,1055,1218 1554,1020,1110',
  d: '95,975,1070 105,980,1090 115,760,1045 124,745,985 134,768,920 144,785,960 154,795,960 164,730,890 173,695,835 183,712,840 193,675,848 203,730,845 213,805,920 222,797,897 232,745,830 242,615,820 252,455,615 262,332,480 271,348,465 281,420,535 291,370,500 301,285,430 311,282,365 320,225,350 330,245,335 340,260,385 350,330,405 360,310,380 370,318,435 379,332,535 389,515,605 399,515,660 409,622,725 418,602,797 428,505,630 438,545,628 448,480,570 458,478,530 467,452,560 477,452,545 487,475,535 497,465,555 507,440,530 516,297,470 526,292,385 536,245,340 546,320,435'
};
const known = new Map();
for (const g in bars) bars[g].split(' ').forEach(s => {
  const [x, h, l] = s.split(',').map(Number);
  const hi = toPx(g, x, h), lo = toPx(g, x, l);
  known.set(11 + 4 * Math.round((hi[0] - 11) / 4), [hi[1], lo[1]]);
});
const keys = [...known.keys()].sort((p, q) => p - q);
let d = '';
for (let k = 0; k < keys.length; k++) {
  const x0 = keys[k], x1 = keys[k + 1] || x0 + 4, p = known.get(x0), q = known.get(x1) || p;
  for (let x = x0; x < x1; x += 4) {
    const t = (x - x0) / (x1 - x0), range = x === x0 ? 0 : 5;
    const hi = p[0] + (q[0] - p[0]) * t + range * Math.sin(x * 2.3);
    const lo = p[1] + (q[1] - p[1]) * t + range * Math.sin(x * 1.7);
    d += 'M' + x + ' ' + Math.round(hi) + 'V' + Math.round(lo);
  }
}
add('price', d, '#000', 2);

// Bid and ask marks, closed trades
add('price', 'M2140 380H2192', BLUE, 4);
add('price', 'M2140 424H2192', '#000', 4);
add('price', 'M1404 673L1497 809M1424 912L1497 815', BLUE, 2, { 'stroke-dasharray': '6 6' });
[[1402, 672], [1421, 912]].forEach(c => {
  const h = 'M' + (c[0] - 6) + ' ' + c[1] + 'h12', v = 'M' + c[0] + ' ' + (c[1] - 6) + 'v12';
  add('price', h + v, '#fff', 8);
  add('price', h + v, '#107c14', 5);
});
add('price', 'M1503 802v21l-8-4v-4l-3-3 3-3v-4z', '#fff', 2, { fill: '#98f090' });

// qqe
add('qqe', curve(points({
  e: '18,744 55,742 110,692 185,650 265,605 310,590 400,540 450,505 530,437 600,412 630,407 700,427 765,450 800,443 850,420 960,418 1000,430 1030,460 1070,520 1110,540 1190,542 1250,575 1320,580 1390,570 1470,570 1510,588 1550,615',
  f: '0,444 65,443 110,422 170,375 230,342 260,344 310,368 345,365 400,315 440,294 510,288 550,300 600,340 640,354 720,330 780,328 830,297 870,293 910,322 960,360 1030,460 1060,530 1090,588 1115,594 1150,578 1190,515 1250,405 1340,300 1395,243 1460,208 1520,148',
  g: '0,315 45,293 110,320 190,385 250,430 290,455 330,520 370,590 415,618 475,618 530,578 580,530 640,450 690,385 715,371 808,371' })), BLUE, 5);
add('qqe', curve(points({
  e: '18,577 60,608 100,630 180,648 260,645 350,630 430,603 500,572 600,522 700,482 800,463 940,445 1040,440 1160,478 1300,518 1400,538 1520,555',
  f: '0,388 90,407 180,408 280,384 380,374 480,348 560,330 650,329 700,335 820,335 880,323 960,323 1030,347 1100,403 1160,450 1210,467 1260,462 1320,440 1400,393 1480,340',
  g: '0,485 70,437 150,393 220,383 310,400 400,455 470,495 530,528 600,535 660,520 730,485 808,453' })), MAROON, 5);
add('qqe', 'M12 1343H2464', '#b84fd0', 2, { 'stroke-dasharray': '6 6' });

// ZigZag legs: bars that stand at +1 or -1
const up = [275, 419, 423, 1051, 1055, 1127, 1643, 1647, 1651, 1659, 1667, 1671, 1691, 1699, 1703, 2027, 2043, 2047, 2051];
const down = [83, 91, 95, 139, 143, 147, 559, 563, 651, 655, 827, 831, 839, 843, 903, 987, 1027, 1167, 1175, 1251, 1343, 1347,
  1371, 1375, 1387, 1391, 1399, 1407, 1411, 1415, 1419, 1423, 1427, 1435, 1867, 1875, 1883, 1887];
let z = 'M11 1421';
for (let x = 15; x <= 2143; x += 4) z += 'L' + x + ' ' + (up.includes(x) ? 1389 : down.includes(x) ? 1453 : 1421);
add('zigzag', z, '#000', 2);
add('zigzag', 'M10 1457v11h11z', 'none', 0, { fill: '#708090' });

// Time scale
['7 Mar 2023', '7 Mar 03:52', '7 Mar 04:24', '7 Mar 04:56', '7 Mar 05:28', '7 Mar 06:00', '7 Mar 06:32', '7 Mar 07:04', '7 Mar 07:36',
  '7 Mar 08:08', '7 Mar 08:40', '7 Mar 09:12', '7 Mar 09:44', '7 Mar 10:16', '7 Mar 10:48', '7 Mar 11:20', '7 Mar 11:52'
].forEach(t => {
  const li = document.createElement('li');
  li.className = 'w-32 shrink-0';
  li.innerHTML = '<i class="ml-0.5 block h-1.5 w-0.5 bg-black"></i>';
  li.append(t);
  document.getElementById('times').append(li);
});
</script>
</body>
</html>
